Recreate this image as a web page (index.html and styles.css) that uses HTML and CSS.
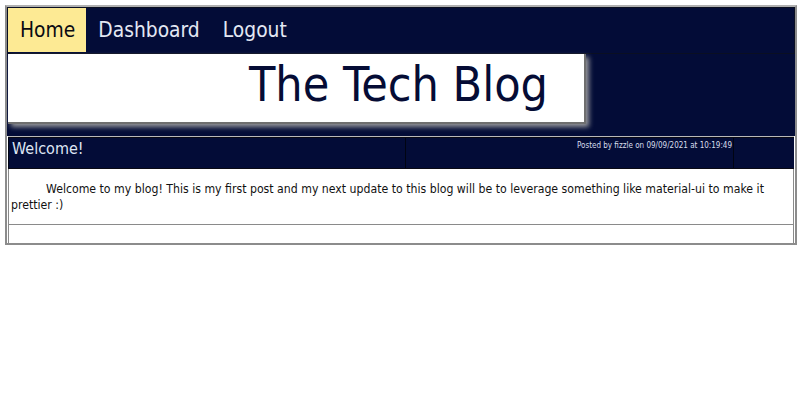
FILE: index.html
```html
<!DOCTYPE html>
<html>
<head>
<meta charset="utf-8">
<title>The Tech Blog</title>
<link rel="stylesheet" href="styles.css">
</head>
<body>
<div class="page">
  <nav class="nav">
    <a class="nav-link active" href="#">Home</a>
    <a class="nav-link" href="#">Dashboard</a>
    <a class="nav-link" href="#">Logout</a>
  </nav>
  <header class="header">
    <div class="title-box"><h1 class="title">The Tech Blog</h1></div>
  </header>
  <section class="post">
    <div class="post-head">
      <div class="cell post-title">Welcome!</div>
      <div class="cell post-meta">Posted by fizzle on 09/09/2021 at 10:19:49</div>
      <div class="cell"></div>
    </div>
    <div class="post-body">
      <p class="post-text">Welcome to my blog! This is my first post and my next update to this blog will be to leverage something like material-ui to make it prettier :)</p>
    </div>
    <div class="post-foot"></div>
  </section>
</div>
</body>
</html>
```
FILE: styles.css
```css
html, body {
  margin: 0;
  padding: 0;
  background: #ffffff;
}
body {
  font-family: "DejaVu Sans Condensed", "DejaVu Sans", sans-serif;
}
.page {
  margin: 5px 4px 0 5px;
  border: 2px solid #8c8c8c;
  border-top-color: #b0b0b0;
  background: #ffffff;
}
.nav {
  display: flex;
  background: #030c37;
  border: 1px solid #0a0f22;
  height: 45px;
}
.nav-link {
  display: block;
  padding: 0 11px 0 12px;
  line-height: 44px;
  height: 44px;
  font-size: 20.8px;
  color: #e4e8f3;
  text-decoration: none;
}
.nav-link.active {
  background: #fdea94;
  color: #0a0a12;
}
.header {
  background: #030c37;
  height: 82px;
  padding-left: 1px;
}
.title-box {
  width: 576px;
  height: 68px;
  background: #ffffff;
  border-right: 2px solid #6f6f6f;
  border-bottom: 2px solid #6f6f6f;
  box-shadow: 3px 3px 5px rgba(160,160,160,0.95);
}
.title {
  margin: 0;
  font-weight: normal;
  font-size: 48px;
  line-height: 60px;
  text-align: right;
  padding-right: 36px;
  color: #050c35;
}
.post {
  border-top: 1px solid #b8b8b8;
  margin: 0 1px;
}
.post-head {
  display: grid;
  grid-template-columns: 398px 328px 1fr;
  background: #030c37;
  border-top: 1px solid #0a0a14;
  border-bottom: 1px solid #0a0a14;
  height: 30px;
}
.cell {
  border-right: 1px solid #000412;
  height: 30px;
}
.cell:last-child {
  border-right: none;
}
.post-title {
  font-size: 16px;
  line-height: 22px;
  color: #dfe6f4;
  padding-left: 3px;
  border-left: 1px solid #000412;
}
.post-meta {
  font-size: 8px;
  line-height: 10px;
  padding-top: 3px;
  padding-right: 1px;
  text-align: right;
  color: #d8deec;
  box-sizing: border-box;
}
.post-body {
  border-left: 1px solid #8a8a8a;
  border-right: 1px solid #8a8a8a;
  border-bottom: 1px solid #8a8a8a;
  padding: 12px 2px 11px;
}
.post-text {
  margin: 0;
  font-size: 12.2px;
  line-height: 16px;
  text-indent: 35px;
  color: #111111;
}
.post-foot {
  height: 18px;
  border-left: 1px solid #8a8a8a;
  border-right: 1px solid #8a8a8a;
}
```
